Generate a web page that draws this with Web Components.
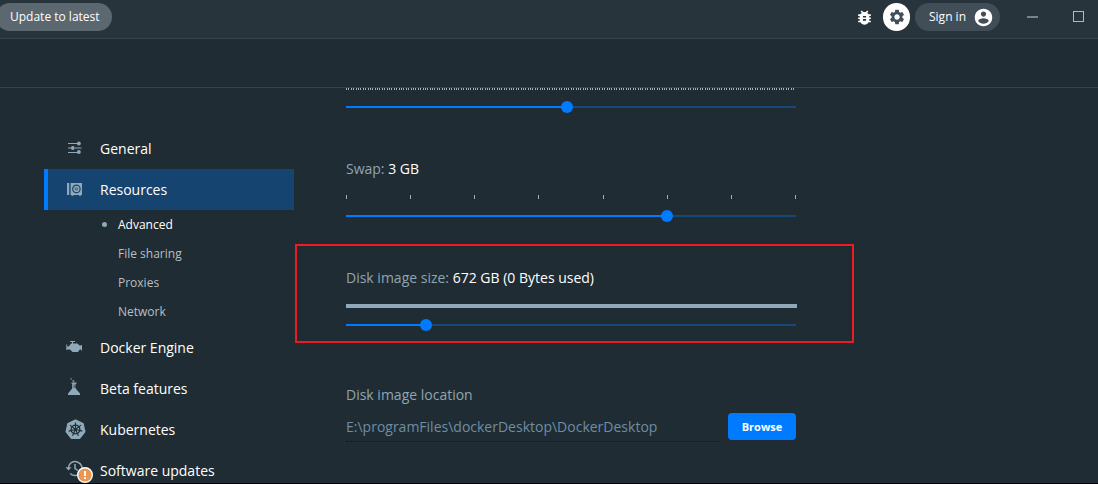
<!DOCTYPE html>
<html lang="en">
<head>
<meta charset="utf-8">
<title>Docker Desktop – Settings</title>
<style>
  body { margin: 0; background: #202c33; font-family: "Open Sans", "Noto Sans", sans-serif; }
</style>
</head>
<body>
<docker-app></docker-app>
<script>
const define = (name, markup, setup) => {
  const template = document.createElement('template');
  template.innerHTML = markup;
  customElements.define(name, class extends HTMLElement {
    constructor() {
      super();
      this.attachShadow({ mode: 'open' }).append(template.content.cloneNode(true));
    }
    connectedCallback() { if (setup) setup(this, this.shadowRoot); }
  });
};

define('top-bar', `
<style>
  :host { display: flex; align-items: center; padding: 3px 13px 7px 0; background: #27343c; border-bottom: 1px solid #36434a; color: #fff; }
  button { font: inherit; font-size: 12px; line-height: 28px; color: inherit; border: 0; padding: 0; background: none; display: flex; align-items: center; justify-content: center; }
  .update { margin-left: -4px; height: 28px; padding: 0 12px 0 14px; border-radius: 14px; background: #5b686f; }
  .space { flex: 1; }
  .bug { width: 19px; height: 28px; }
  .gear { width: 27px; height: 28px; border-radius: 14px; background: #fff; margin: 0 5px 0 9px; }
  .sign { height: 28px; padding: 0 6px 0 14px; gap: 7px; border-radius: 14px; background: #414e58; }
  .min { width: 12px; height: 28px; margin: 0 34px 0 27px; }
  .max { width: 12px; height: 28px; }
  svg { display: block; flex: none; }
</style>
<button class="update">Update to latest</button>
<div class="space"></div>
<button class="bug" aria-label="Troubleshoot"><svg width="19" height="19" viewBox="0 0 24 24" fill="#fff"><path d="M20 8h-2.810c-.45-.78-1.070-1.450-1.820-1.960L17 4.410 15.590 3l-2.170 2.170C12.960 5.060 12.490 5 12 5s-.96.060-1.410.17L8.410 3 7 4.410l1.620 1.630C7.880 6.550 7.260 7.220 6.810 8H4v2h2.090c-.05.33-.09.66-.09 1v1H4v2h2v1c0 .34.040.67.090 1H4v2h2.810c1.040 1.790 2.970 3 5.190 3s4.150-1.210 5.190-3H20v-2h-2.090c.05-.33.09-.66.09-1v-1h2v-2h-2v-1c0-.34-.04-.67-.09-1H20V8zm-6 8h-4v-2h4v2zm0-4h-4v-2h4v2z"/></svg></button>
<button class="gear" aria-label="Settings"><svg width="18" height="18" viewBox="0 0 24 24" fill="#40505b"><path d="M19.140 12.940c.04-.3.060-.61.060-.94 0-.32-.02-.64-.07-.94l2.030-1.580c.18-.14.230-.41.120-.61l-1.920-3.320c-.12-.22-.37-.29-.59-.22l-2.390.96c-.5-.38-1.030-.7-1.620-.94l-.36-2.540c-.04-.24-.24-.41-.48-.41h-3.840c-.24 0-.43.170-.47.410l-.36 2.540c-.59.240-1.130.570-1.620.940l-2.390-.96c-.22-.08-.47 0-.59.220L2.740 8.870c-.12.210-.08.470.120.610l2.030 1.580c-.05.300-.09.630-.09.940s.02.640.070.940l-2.030 1.580c-.18.140-.23.410-.12.610l1.920 3.320c.12.220.370.290.590.220l2.390-.96c.5.380 1.030.700 1.620.940l.36 2.540c.05.240.240.410.480.410h3.840c.24 0 .44-.17.470-.41l.36-2.540c.59-.24 1.130-.56 1.620-.94l2.390.96c.22.080.470 0 .590-.22l1.920-3.320c.12-.22.070-.47-.12-.61l-2.010-1.580zM12 15.600c-1.980 0-3.600-1.620-3.600-3.600s1.620-3.600 3.600-3.600 3.600 1.620 3.600 3.600-1.620 3.600-3.600 3.600z"/></svg></button>
<button class="sign">Sign in <svg width="21" height="21" viewBox="0 0 24 24" fill="#fff"><path d="M12 2C6.480 2 2 6.480 2 12s4.480 10 10 10 10-4.480 10-10S17.520 2 12 2zm0 3c1.660 0 3 1.340 3 3s-1.340 3-3 3-3-1.340-3-3 1.340-3 3-3zm0 14.200c-2.500 0-4.710-1.280-6-3.220.03-1.990 4-3.080 6-3.080 1.990 0 5.970 1.090 6 3.080-1.290 1.940-3.500 3.220-6 3.220z"/></svg></button>
<button class="min" aria-label="Minimize"><svg width="12" height="12"><path d="M0 5h11v2h-11z" fill="#7c8383"/></svg></button>
<button class="max" aria-label="Maximize"><svg width="12" height="12"><rect x=".5" y=".5" width="10" height="10" fill="none" stroke="#b3b8b8"/></svg></button>
`);

define('nav-item', `
<style>
  :host { display: block; color: #fff; }
  a { display: flex; align-items: center; gap: 14px; height: 41px; padding-left: 16px; border-left: 4px solid transparent; font-size: 14px; color: inherit; text-decoration: none; }
  :host([active]) a { background: #164470; border-left-color: #007bff; }
  ::slotted(svg) { display: block; flex: none; overflow: visible; }
</style>
<a href="#"><slot name="icon"></slot><slot></slot></a>
`);

define('nav-subitem', `
<style>
  :host { display: block; color: #b9bfc2; }
  :host([active]) { color: #fff; }
  a { display: flex; align-items: center; height: 29px; padding-left: 58px; font-size: 12px; color: inherit; text-decoration: none; }
  a::before { content: ""; width: 5px; height: 5px; margin-right: 11px; border-radius: 50%; }
  :host([active]) a::before { background: #8fa9b9; }
</style>
<a href="#"><slot></slot></a>
`);

define('settings-nav', `
<style>
  :host { display: block; }
  .sub { padding-bottom: 1px; }
</style>
<nav>
  <nav-item><svg slot="icon" width="22" height="22" fill="#8fa9b9"><path d="M4 5h8v1H4zM4 9.500h3v1H4zM11 9.500h6.500v1H11zM4 14h8v1H4z"/><path d="M12 5h2v1h-2zM12 14h2v1h-2z"/><circle cx="14.900" cy="5.500" r="1.900"/><circle cx="8.800" cy="10" r="1.900"/><circle cx="14.900" cy="14" r="1.900"/></svg>General</nav-item>
  <nav-item active><svg slot="icon" width="22" height="22"><path fill="#8fa9b9" d="M3 4h2.200v12H3zM6.600 4H18v12h-1v.8h-2V16H9.500v.8h-2V16h-.9z"/><circle cx="12.400" cy="9.900" r="3.700" fill="none" stroke="#164470" stroke-width="1.200"/><circle cx="12.400" cy="9.900" r="1.200" fill="none" stroke="#31587f"/></svg>Resources</nav-item>
  <div class="sub">
    <nav-subitem active>Advanced</nav-subitem>
    <nav-subitem>File sharing</nav-subitem>
    <nav-subitem>Proxies</nav-subitem>
    <nav-subitem>Network</nav-subitem>
  </div>
  <nav-item><svg slot="icon" width="22" height="22" fill="#8fa9b9"><path d="M6 4h5v1H9v1.500h4.500L15.500 8.500h1.700V8h.8v5.500h-.8v-1h-1.400L14 15H8.500L6 12.500H3.200V13h-.9V7.500h.9v2h1.600L7 6.500h1V5H6z"/></svg>Docker Engine</nav-item>
  <nav-item><svg slot="icon" width="22" height="22" fill="#8fa9b9"><path d="M7.500 4.500h5v1.200h-.8v1H9.500v.9h2.200v1H9.500v.9h2.200v1.100l4.300 4.900v1.500H4v-1.500l4.200-4.900V5.700h-.7zM8.600 2.300h1.700v1.500H8.600zM6.500.3h1.200v1.300H6.500z"/></svg>Beta features</nav-item>
  <nav-item><svg slot="icon" width="22" height="22" viewBox="-11.500 -10.500 22 22"><path fill="#8fa9b9" stroke="#8fa9b9" stroke-width="2" stroke-linejoin="round" d="M0-9 7.300-5.500 9 2.200 4 8.400H-4L-9 2.200-7.300-5.500Z"/><g fill="none" stroke="#202c33"><circle r="4.400" stroke-width="1.300"/><path stroke-width="1.100" d="M0 0V-7M0 0 5.500-4.400M0 0 6.800 1.600M0 0 3 6.300M0 0-3 6.300M0 0-6.800 1.600M0 0-5.500-4.400"/></g></svg>Kubernetes</nav-item>
  <nav-item><svg slot="icon" width="22" height="22"><g fill="none" stroke="#8fa9b9" stroke-width="1.500"><path d="M4.200 8a7 7 0 1 1 2 5.500"/><path d="M11 4v4.500l3 2"/></g><path d="M1.500 7.300h6L4.500 10.600z" fill="#8fa9b9"/><circle cx="21" cy="15" r="7.300" fill="#ec9654" stroke="#fff" stroke-width="1.400"/><path d="M20 11h2v5h-2zM20 17.200h2V19h-2z" fill="#fff"/></svg>Software updates</nav-item>
</nav>
`);

define('range-setting', `
<style>
  :host { display: block; position: relative; }
  label { display: block; font-size: 14px; line-height: 20px; margin-bottom: 16px; color: #8fa5b2; }
  label span { color: #fff; }
  label:empty { display: none; }
  .ticks { display: flex; justify-content: space-between; height: 4px; }
  .ticks i { width: 1px; background: #9eb1bd; }
  :host([clipped]) .ticks { height: 2px; }
  :host([dense]) .ticks { background: #8fa9b9; margin-right: -1px; }
  input { -webkit-appearance: none; appearance: none; display: block; width: calc(100% + 12px); height: 12px; margin: 11px -6px 0; background:
      linear-gradient(#007bff, #007bff) 6px 5px / calc((100% - 12px) * var(--fill)) 2px no-repeat,
      linear-gradient(#164878, #164878) 6px 5px / calc(100% - 12px) 2px no-repeat; }
  input::-webkit-slider-thumb { -webkit-appearance: none; width: 12px; height: 12px; border-radius: 50%; background: #007bff; }
  .mark { display: none; }
  :host([marked]) .mark { display: block; position: absolute; inset: -24px -58px -12px -51px; border: 2px solid #ed1c24; pointer-events: none; }
</style>
<label for="range"></label>
<div class="ticks"></div>
<input type="range" id="range" step="any">
<div class="mark"></div>
`, (host, root) => {
  const { name, text, ticks, min, max, value } = host.dataset;
  const label = root.querySelector('label');
  const input = root.querySelector('input');
  if (name) {
    const span = document.createElement('span');
    span.textContent = text;
    label.replaceChildren(name + ': ', span);
  } else input.setAttribute('aria-label', 'Memory');
  root.querySelector('.ticks').replaceChildren(...Array.from({ length: +ticks }, () => document.createElement('i')));
  input.min = min; input.max = max; input.value = value;
  const paint = () => input.style.setProperty('--fill', (input.value - min) / (max - min));
  input.addEventListener('input', paint);
  paint();
});

define('path-setting', `
<style>
  :host { display: block; font-size: 14px; }
  label { display: block; line-height: 20px; color: #8fa5b2; }
  .row { display: flex; align-items: flex-start; gap: 8px; margin-top: 8px; }
  input { flex: 1; min-width: 0; box-sizing: border-box; height: 29px; padding: 0 0 2px; border: 0; border-bottom: 1px dotted #0d161b; background: none; font: inherit; color: #6f8da3; }
  button { width: 68px; height: 27px; padding: 0; border: 0; border-radius: 4px; background: #007bff; color: #fff; font: inherit; font-size: 11px; font-weight: 700; }
</style>
<label for="path">Disk image location</label>
<div class="row"><input id="path" type="text" readonly value="E:\\programFiles\\dockerDesktop\\DockerDesktop"><button>Browse</button></div>
`);

define('docker-app', `
<style>
  :host { display: flex; flex-direction: column; box-sizing: border-box; height: 100vh; overflow: hidden; border-bottom: 1px solid #000; }
  top-bar { flex: none; }
  header { flex: none; height: 48px; border-bottom: 1px solid #36434a; }
  .body { flex: 1; min-height: 0; overflow: hidden; display: flex; gap: 52px; padding-left: 44px; }
  settings-nav { width: 250px; flex: none; padding-top: 40px; }
  main { flex: 1; max-width: 450px; display: flex; flex-direction: column; gap: 46px; }
  path-setting { margin-top: 8px; }
</style>
<top-bar></top-bar>
<header></header>
<div class="body">
  <settings-nav></settings-nav>
  <main>
    <range-setting clipped data-ticks="188" data-min="0" data-max="450" data-value="221"></range-setting>
    <range-setting data-name="Swap" data-text="3 GB" data-ticks="8" data-min="0.5" data-max="4" data-value="3"></range-setting>
    <range-setting dense marked data-name="Disk image size" data-text="672 GB (0 Bytes used)" data-ticks="0" data-min="0" data-max="450" data-value="80"></range-setting>
    <path-setting></path-setting>
  </main>
</div>
`);
</script>
</body>
</html>
